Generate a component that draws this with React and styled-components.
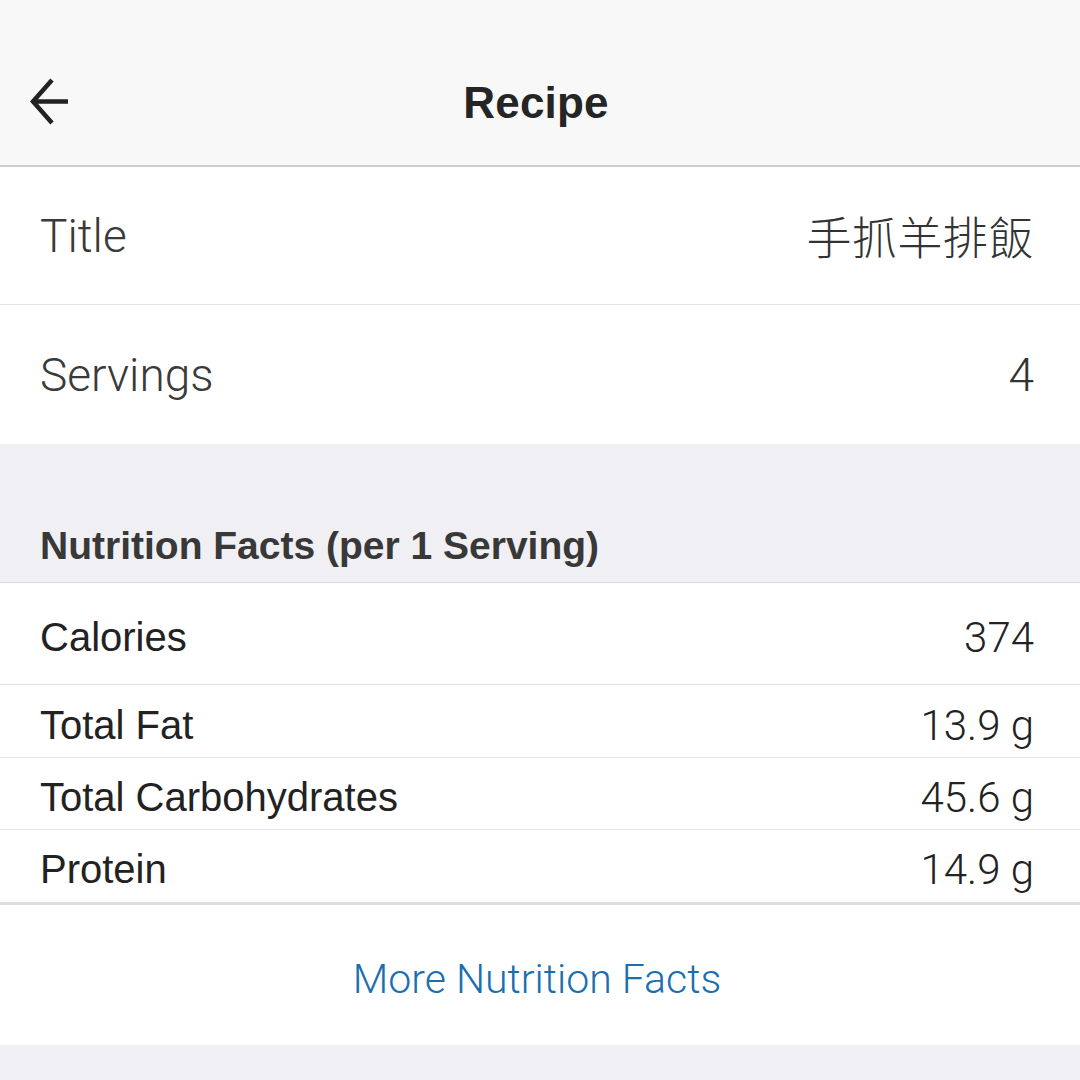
import React from 'react'
import styled, { createGlobalStyle } from 'styled-components';

const GlobalStyle = createGlobalStyle`
html, body {
  margin: 0;
  padding: 0;
  background: #efeff4;
}
body {
  font-family: "Liberation Sans", Roboto, sans-serif;
  -webkit-font-smoothing: antialiased;
}
`;

const nutrients = [
    { label: 'Calories', value: '374', height: 102 },
    { label: 'Total Fat', value: '13.9 g', height: 73 },
    { label: 'Total Carbohydrates', value: '45.6 g', height: 72 },
    { label: 'Protein', value: '14.9 g', height: 75, last: true },
];

function BackArrow() {
    return (
        <svg width="42" height="50" viewBox="0 0 42 50" fill="none">
            <path d="M4 24.5 H39 M23 3 L4 24.5 L23 46" stroke="#222" strokeWidth="4.5" strokeLinejoin="miter" />
        </svg>
    )
}

function App() {
    return (
        <Page>
            <GlobalStyle />
            <NavBar>
                <BackButton><BackArrow /></BackButton>
                <NavTitle>Recipe</NavTitle>
            </NavBar>

            <FieldRow $height={137} $border>
                <FieldLabel>Title</FieldLabel>
                <FieldValue $cjk>手抓羊排飯</FieldValue>
            </FieldRow>
            <FieldRow $height={139}>
                <FieldLabel>Servings</FieldLabel>
                <FieldValue>4</FieldValue>
            </FieldRow>

            <SectionHeader>Nutrition Facts (per 1 Serving)</SectionHeader>

            {nutrients.map((n) => (
                <NutrientRow key={n.label} $height={n.height} $last={n.last}>
                    <NutrientLabel>{n.label}</NutrientLabel>
                    <NutrientValue>{n.value}</NutrientValue>
                </NutrientRow>
            ))}

            <MoreButton>
                <MoreLink>More Nutrition Facts</MoreLink>
            </MoreButton>
        </Page>
    )
}

export default App



const Page = styled.div`
width: 1080px;
min-height: 1080px;
background: #efeff4;
overflow: hidden;
`;

const NavBar = styled.header`
position: relative;
height: 167px;
box-sizing: border-box;
padding-top: 40px;
background: #f8f8f8;
border-bottom: 2px solid #cdcdcd;
display: flex;
align-items: center;
justify-content: center;
`;

const BackButton = styled.div`
position: absolute;
left: 29px;
top: 77px;
width: 42px;
height: 50px;
display: flex;
`;

const NavTitle = styled.h1`
margin: 0;
font-family: "Liberation Sans", Arial, sans-serif;
font-weight: 700;
font-size: 44px;
color: #252525;
letter-spacing: 0.2px;
transform: translateX(-4px);
`;

const FieldRow = styled.div`
height: ${p => p.$height}px;
background: #fff;
display: flex;
align-items: center;
justify-content: space-between;
padding: 0 46px 0 40px;
border-bottom: ${p => p.$border ? '1px solid #e3e3e3' : 'none'};
`;

const FieldLabel = styled.span`
font-family: Roboto, "Liberation Sans", sans-serif;
font-weight: 300;
font-size: 46px;
color: #3a3a3a;
`;

const FieldValue = styled.span`
font-family: Roboto, "Noto Sans CJK TC", sans-serif;
font-weight: 300;
font-size: ${p => p.$cjk ? '45px' : '46px'};
color: #333;
letter-spacing: ${p => p.$cjk ? '0.5px' : '0'};
`;

const SectionHeader = styled.div`
height: 139px;
box-sizing: border-box;
display: flex;
align-items: flex-end;
padding: 0 40px 12px;
font-family: "Liberation Sans", Arial, sans-serif;
font-weight: 700;
font-size: 39px;
line-height: 48px;
color: #383838;
background: #efeff4;
border-bottom: 1px solid #dcdce0;
`;

const NutrientRow = styled.div`
height: ${p => p.$height}px;
box-sizing: border-box;
background: #fff;
display: flex;
align-items: center;
justify-content: space-between;
padding: ${p => p.$last ? '6px' : '8px'} 46px 0 40px;
border-bottom: ${p => p.$last ? '3px solid #dedede' : '1px solid #e3e3e3'};
`;

const NutrientLabel = styled.span`
font-family: "Liberation Sans", Arial, sans-serif;
font-size: 40px;
color: #222;
`;

const NutrientValue = styled.span`
font-family: Roboto, "Liberation Sans", sans-serif;
font-weight: 300;
font-size: 42px;
color: #222;
`;

const MoreButton = styled.div`
height: 140px;
box-sizing: border-box;
padding-top: 8px;
background: #fff;
display: flex;
align-items: center;
justify-content: center;
`;

const MoreLink = styled.a`
font-family: Roboto, "Liberation Sans", sans-serif;
font-weight: 300;
font-size: 41px;
color: #1a6fb0;
cursor: pointer;
transform: translateX(-3px);
`;
